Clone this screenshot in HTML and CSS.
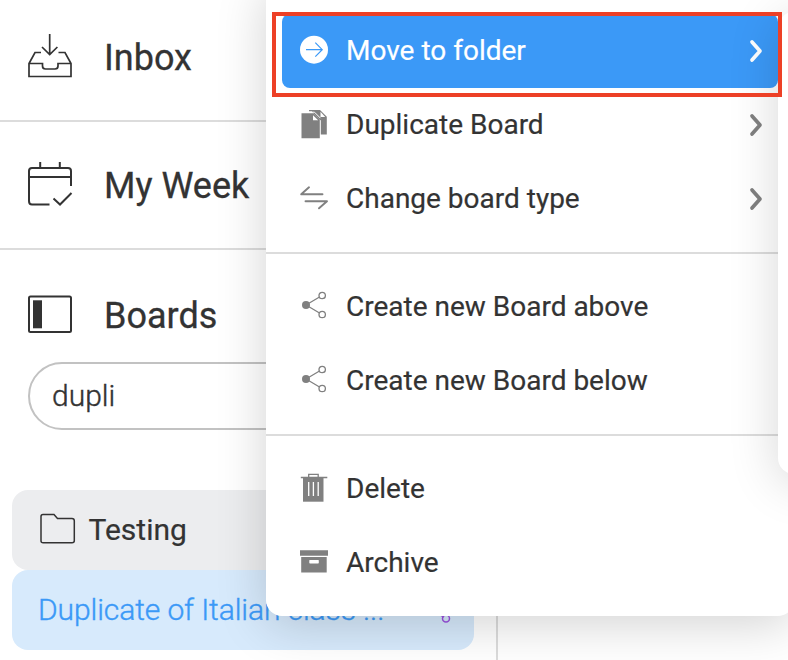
FILE: index.html
```
<!DOCTYPE html>
<html lang="en">
<head>
<meta charset="utf-8">
<title>Boards</title>
<link rel="stylesheet" href="styles.css">
</head>
<body>
<aside class="sidebar">
  <div class="nav inbox">
    <svg class="nav-icon" viewBox="0 0 44 44" stroke-width="1.7"><path d="M21.700 0V20.500M14 13l7.700 7.500 7.700-7.500M13 18.500H7L1 29.500v13h42v-13l-6-11H30.500M1 29.500h13.500v2.500q0 3 3 3h9.500q3 0 3-3v-2.500H43"/></svg>
    <span>Inbox</span>
  </div>
  <div class="nav week">
    <svg class="nav-icon" viewBox="0 0 44 44" stroke-width="2"><path d="M12.200 0v6M31.800 0v6M43 24V9q0-3-3-3H4Q1 6 1 9v30q0 3.500 3 3.500h17.500M1 15h42M25.500 36.500l6.500 6L43.500 31"/></svg>
    <span>My Week</span>
  </div>
  <div class="nav boards">
    <svg class="nav-icon" viewBox="0 0 44 44" stroke-width="2"><rect x="1" y="4.500" width="42" height="35.500" rx="1.500"/><path d="M5 8.300h9v28H5z" fill="#333" stroke="none"/></svg>
    <span>Boards</span>
  </div>
  <div class="search">dupli</div>
  <div class="folder">
    <svg class="folder-icon" viewBox="0 0 36 32"><path d="M3 1.500h11l3.500 4H32q2.300 0 2.300 2.300v20q0 2-2.300 2H3.200Q1 29.800 1 27.800V3.500q0-2 2-2z"/></svg>
    <span>Testing</span>
  </div>
  <div class="board">
    <span>Duplicate of Italian class ...</span>
    <svg class="board-share" viewBox="0 0 28 28"><path d="M5 14 20 6M5 14l14 8"/><circle cx="21.500" cy="5.700" r="3.300"/><circle cx="21" cy="23.500" r="3.500"/></svg>
  </div>
</aside>

<div class="menu">
  <div class="item selected">
    <svg class="icon" viewBox="0 0 28 28"><circle cx="14" cy="13.700" r="14" fill="#fff"/><path d="M6 13.700h16M15.300 6.700l6.900 7-6.900 7" fill="none" stroke="#3b99f7" stroke-width="1.200"/></svg>
    <span>Move to folder</span>
    <svg class="chevron" viewBox="0 0 14 24"><path d="M3 3l8 9-8 9"/></svg>
  </div>
  <div class="item">
    <svg class="icon" viewBox="0 0 28 28"><path d="M9 0h11l6.800 6.800V24.500h-6V10.500L11.500 1.300H9z" fill="#808080"/><path d="M1.500 3.200H13.500l6.300 6.300v18.700H1.500z" fill="#808080"/><path d="M13 5.200v5h5.200zM20.500 1.800v5.300h4.700z" fill="#fff"/><path d="M11 2.200h3.500l6 6" stroke="#fff" fill="none" stroke-width="1"/></svg>
    <span>Duplicate Board</span>
    <svg class="chevron" viewBox="0 0 14 24"><path d="M3 3l8 9-8 9"/></svg>
  </div>
  <div class="item">
    <svg class="icon" viewBox="0 0 28 28"><path d="M9 3.300 1.200 10.300H22.500M5.500 17.300H27L19 24.300" fill="none" stroke="#808080" stroke-width="1.900" stroke-linecap="round" stroke-linejoin="round"/></svg>
    <span>Change board type</span>
    <svg class="chevron" viewBox="0 0 14 24"><path d="M3 3l8 9-8 9"/></svg>
  </div>
  <hr>
  <div class="item">
    <svg class="icon" viewBox="0 0 28 28"><g fill="none" stroke="#808080" stroke-width="1.300"><path d="M6 13 19.500 5M6 13l13.500 8"/><circle cx="22.200" cy="3.500" r="3.200"/><circle cx="22.200" cy="22.500" r="3.200"/></g><circle cx="6" cy="13" r="4" fill="#808080"/></svg>
    <span>Create new Board above</span>
  </div>
  <div class="item">
    <svg class="icon" viewBox="0 0 28 28"><g fill="none" stroke="#808080" stroke-width="1.300"><path d="M6 13 19.500 5M6 13l13.500 8"/><circle cx="22.200" cy="3.500" r="3.200"/><circle cx="22.200" cy="22.500" r="3.200"/></g><circle cx="6" cy="13" r="4" fill="#808080"/></svg>
    <span>Create new Board below</span>
  </div>
  <hr>
  <div class="item">
    <svg class="icon" viewBox="0 0 28 28"><path d="M.8 3.500h26.500M8.700 3.700V.4h9.500v3.300" fill="none" stroke="#808080" stroke-width="1.300"/><path d="M3 3.700h20.500v24H3z" fill="#808080"/><path d="M8.700 7.900v14M13.400 7.900v14M18.200 7.900v14" stroke="#fff" stroke-width="1.300"/></svg>
    <span>Delete</span>
  </div>
  <div class="item">
    <svg class="icon" viewBox="0 0 28 28"><path d="M0 2.300h28v5.500H0zM1.200 9.100h25.500v15.300H1.200z" fill="#808080"/><rect x="9.300" y="11.900" width="9.500" height="3.500" rx=".7" fill="#fff"/></svg>
    <span>Archive</span>
  </div>
</div>
<div class="submenu"></div>
<div class="highlight"></div>
</body>
</html>
```
FILE: styles.css
```
* { box-sizing: border-box; }
html { overflow: hidden; }
body { margin: 0; width: 788px; height: 660px; overflow: hidden; position: relative; background: #fff; color: #333; font-family: Roboto, sans-serif; }
svg { display: block; flex: none; overflow: visible; }
.sidebar { width: 498px; height: 660px; border-right: 2px solid #dcdcdc; }
.nav { display: flex; align-items: flex-start; gap: 32px; padding-left: 28px; font-size: 36px; line-height: 42px; font-weight: 400; -webkit-text-stroke: .3px #333; }
.nav span { margin-top: 3px; }
.nav-icon { width: 44px; height: 44px; fill: none; stroke: #333; }
.inbox { height: 122px; padding-top: 34px; border-bottom: 2px solid #dcdcdc; }
.week { height: 128px; padding-top: 40px; border-bottom: 2px solid #dcdcdc; }
.boards { height: 112px; padding-top: 42px; }
.search { margin-left: 28px; width: 440px; height: 68px; border: 2px solid #c2c2c2; border-radius: 34px; padding-left: 22px; font-size: 30px; line-height: 64px; font-weight: 300; -webkit-text-stroke: .4px #333; }
.folder { margin: 60px 0 0 12px; width: 462px; height: 80px; border-radius: 16px; background: #ecedef; display: flex; align-items: center; gap: 13px; padding: 0 0 2px 27.5px; font-size: 30px; -webkit-text-stroke: .2px #333; }
.folder-icon { width: 36px; height: 32px; fill: none; stroke: #333; stroke-width: 1.500; }
.board { margin-left: 12px; width: 462px; height: 80px; border-radius: 16px; background: #d7eafc; color: #3b99f7; display: flex; align-items: center; justify-content: space-between; padding: 0 21px 2px 26px; font-size: 30px; font-weight: 300; letter-spacing: -.09px; -webkit-text-stroke: .4px #3b99f7; }
.board-share { width: 28px; height: 28px; fill: none; stroke: #9b51e0; stroke-width: 1.500; }
.menu { position: absolute; left: 266px; top: -20px; width: 528px; height: 636px; padding: 34px 16px 16px; background: #fff; border-radius: 16px; box-shadow: 0 8px 50px rgba(0,0,0,.18); }
.item { height: 74px; display: flex; align-items: center; padding: 0 15px 2px 18px; font-size: 28px; -webkit-text-stroke: .2px; }
.item span { margin-left: 18px; }
.selected { background: #3b99f7; color: #fff; border-radius: 8px; }
.icon { width: 28px; height: 28px; }
.chevron { width: 14px; height: 24px; margin-left: auto; position: relative; top: 1px; fill: none; stroke: #808080; stroke-width: 3.700; stroke-linecap: round; stroke-linejoin: round; }
.selected .chevron { stroke: #fff; }
.item:not(.selected) { color: #333; }
hr { border: 0; height: 2px; margin: 16px -16px; background: #dcdcdc; }
.submenu { position: absolute; left: 778px; top: 12px; width: 300px; height: 462px; background: #fff; border-radius: 16px; box-shadow: 0 8px 50px rgba(0,0,0,.16); }
.highlight { position: absolute; left: 272px; top: 12px; width: 510px; height: 85px; border: 4px solid #ed4026; }
```
